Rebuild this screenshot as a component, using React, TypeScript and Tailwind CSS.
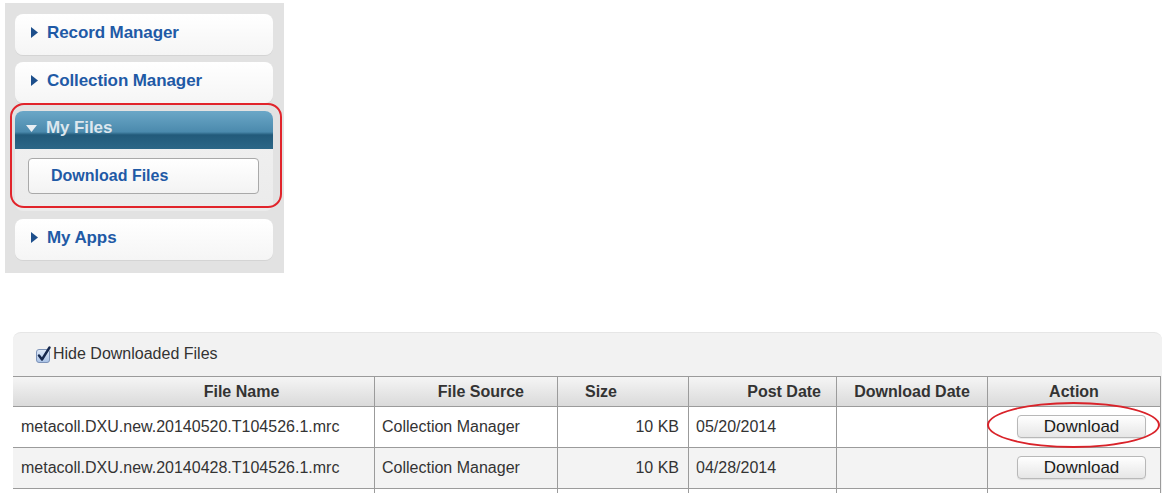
import React from 'react';

const font = { fontFamily: '"Liberation Sans", Arial, sans-serif' };

const Triangle = () => (
  <svg width="7" height="11" viewBox="0 0 7 11" className="shrink-0">
    <path d="M0 0 L7 5.5 L0 11 Z" fill="#1d4f8c" />
  </svg>
);

const NavCard = ({ label }: { label: string }) => (
  <div className="h-[41px] rounded-[8px] bg-[linear-gradient(to_bottom,#ffffff,#f5f5f5)] shadow-[0_1px_0_#d4d4d4] flex items-center pl-[16px] pb-[4px] gap-[9px]">
    <Triangle />
    <span className="text-[17px] font-bold text-[#1f5aa6] tracking-[-0.1px]">{label}</span>
  </div>
);

const Checkbox = () => (
  <svg width="17" height="17" viewBox="0 0 17 17" className="shrink-0">
    <defs>
      <linearGradient id="cb" x1="0" y1="0" x2="0" y2="1">
        <stop offset="0" stopColor="#dfe9f7" />
        <stop offset="1" stopColor="#a9c2e6" />
      </linearGradient>
    </defs>
    <rect x="1.5" y="3.5" width="13" height="13" rx="2.5" fill="url(#cb)" stroke="#7d93b8" />
    <path d="M4 9.5 L7 13.5 L14.5 1.5" fill="none" stroke="#16284d" strokeWidth="2.4" strokeLinecap="round" strokeLinejoin="round" />
  </svg>
);

const DownloadButton = () => (
  <button className="w-[129px] h-[23px] rounded-[4px] border border-[#b8b8b8] bg-[linear-gradient(to_bottom,#ffffff,#e6e6e6)] text-[17px] leading-none text-[#1c1c1c] shadow-[0_1px_1px_rgba(0,0,0,0.08)]">
    Download
  </button>
);

const rows = [
  { name: 'metacoll.DXU.new.20140520.T104526.1.mrc', source: 'Collection Manager', size: '10 KB', date: '05/20/2014', bg: 'bg-white' },
  { name: 'metacoll.DXU.new.20140428.T104526.1.mrc', source: 'Collection Manager', size: '10 KB', date: '04/28/2014', bg: 'bg-[#f3f3f3]' },
];

const td = 'border border-[#9b9b9b] text-[16px] text-[#333] p-0';

export default function App() {
  return (
    <div className="w-[1175px] h-[501px] bg-white overflow-hidden" style={font}>
      {/* side menu */}
      <div className="relative ml-[5px] mt-[3px] w-[279px] bg-[#e2e2e2] pl-[10px] pr-[11px] pt-[11px] pb-[13px] flex flex-col gap-[7px]">
        <NavCard label="Record Manager" />
        <NavCard label="Collection Manager" />
        <div className="mt-[1px] rounded-[8px] bg-[linear-gradient(to_bottom,#f1f1f1,#ebebeb)]">
          <div className="h-[38px] rounded-t-[8px] bg-[linear-gradient(to_bottom,#6ba7c7_0%,#4b8aad_55%,#225a7a_63%,#2c6787_100%)] flex items-center pl-[11px] pb-[4px] gap-[9px]">
            <svg width="11" height="7" viewBox="0 0 11 7" className="shrink-0">
              <path d="M0 0 L11 0 L5.5 7 Z" fill="#e8eef3" />
            </svg>
            <span className="text-[17px] font-bold text-[#dde7ee] tracking-[-0.1px]">My Files</span>
          </div>
          <div className="pt-[9px] pb-[17px] pl-[13px] pr-[14px]">
            <div className="h-[36px] rounded-[4px] border border-[#a9a9a9] bg-[linear-gradient(to_bottom,#ffffff,#f3f3f3)] flex items-center pl-[22px] text-[16px] font-bold text-[#1f5aa6]">
              Download Files
            </div>
          </div>
        </div>
        <div className="mt-[1px]">
          <NavCard label="My Apps" />
        </div>
        {/* annotation */}
        <div className="absolute left-[5px] top-[100px] w-[272px] h-[105px] rounded-[14px] border-[2.5px] border-[#e1242b] pointer-events-none" />
      </div>

      {/* files panel */}
      <div className="relative ml-[13px] mt-[59px] w-[1149px] h-[161px] overflow-hidden rounded-t-[8px] bg-[#f2f2f2] border-t border-[#e6e6e6]">
        <label className="h-[43px] flex items-center pl-[22px] pb-[1px] gap-[1px] text-[16px] text-[#333]">
          <Checkbox />
          Hide Downloaded Files
        </label>
        <table className="border-collapse table-fixed w-[1148px] -ml-px">
          <colgroup>
            <col className="w-[362px]" />
            <col className="w-[183px]" />
            <col className="w-[131px]" />
            <col className="w-[148px]" />
            <col className="w-[151px]" />
            <col className="w-[173px]" />
          </colgroup>
          <thead>
            <tr className="h-[30px] bg-[linear-gradient(to_bottom,#f5f5f5,#d9d9d9)] font-bold">
              <th className={`${td} font-bold text-center pl-[96px]`}>File Name</th>
              <th className={`${td} font-bold text-right pr-[33px]`}>File Source</th>
              <th className={`${td} font-bold text-left pl-[27px]`}>Size</th>
              <th className={`${td} font-bold text-right pr-[15px]`}>Post Date</th>
              <th className={`${td} font-bold text-center`}>Download Date</th>
              <th className={`${td} font-bold text-center`}>Action</th>
            </tr>
          </thead>
          <tbody>
            {rows.map((r) => (
              <tr key={r.name} className={`h-[41px] ${r.bg}`}>
                <td className={`${td} pl-[8px]`}>{r.name}</td>
                <td className={`${td} pl-[7px]`}>{r.source}</td>
                <td className={`${td} text-right pr-[9px]`}>{r.size}</td>
                <td className={`${td} pl-[7px]`}>{r.date}</td>
                <td className={td}></td>
                <td className={`${td} pl-[29px]`}>
                  <DownloadButton />
                </td>
              </tr>
            ))}
            <tr className="h-[41px] bg-white">
              <td className={td}></td>
              <td className={td}></td>
              <td className={td}></td>
              <td className={td}></td>
              <td className={td}></td>
              <td className={td}></td>
            </tr>
          </tbody>
        </table>
        {/* annotation */}
        <div className="absolute left-[974px] top-[69px] w-[173px] h-[46px] rounded-[50%] border-[2.5px] border-[#d9232a] pointer-events-none" />
      </div>
    </div>
  );
}
